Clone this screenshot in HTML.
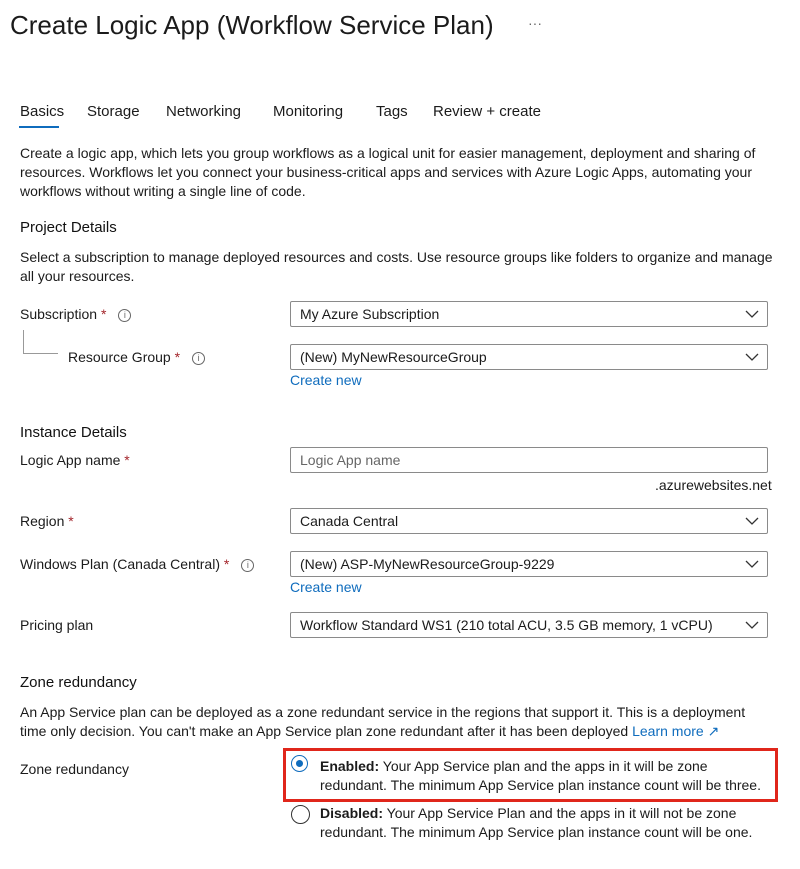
<!DOCTYPE html>
<html><head><meta charset="utf-8"><style>
body{margin:0;width:800px;height:869px;background:#fff;font-family:"Liberation Sans",sans-serif;color:#1b1b1b;position:relative;overflow:hidden}
.a{position:absolute;white-space:nowrap;font-size:14px;line-height:19px}
.t{font-size:26px;line-height:32px}
.h{font-size:15px;font-weight:normal;color:#111}
.req{color:#a4262c}
.i{display:inline-block;width:11px;height:11px;border:1px solid #666;border-radius:50%;font-size:9px;line-height:11px;text-align:center;color:#666;vertical-align:1px;margin-left:12px}
.sel{position:absolute;left:290px;width:476px;height:24px;border:1px solid #8a8a8a;border-radius:2px;font-size:14px;line-height:24px;box-sizing:content-box}
.sel span{margin-left:9px}
.sel svg{position:absolute;right:8px;top:8px}
.lk{color:#0f6cbd}
</style></head><body>
<div class="a t" style="left:10px;top:9px">Create Logic App (Workflow Service Plan)</div>
<div class="a" style="left:528px;top:14px;color:#666">···</div>
<div class="a" style="left:20px;top:102px;font-size:15px">Basics</div>
<div style="position:absolute;left:19px;top:126px;width:40px;height:2px;background:#0f6cbd"></div>
<div class="a" style="left:87px;top:102px;font-size:15px">Storage</div>
<div class="a" style="left:166px;top:102px;font-size:15px">Networking</div>
<div class="a" style="left:273px;top:102px;font-size:15px">Monitoring</div>
<div class="a" style="left:376px;top:102px;font-size:15px">Tags</div>
<div class="a" style="left:433px;top:102px;font-size:15px">Review + create</div>
<div class="a" style="left:20px;top:144px;white-space:normal;width:760px">Create a logic app, which lets you group workflows as a logical unit for easier management, deployment and sharing of resources. Workflows let you connect your business-critical apps and services with Azure Logic Apps, automating your workflows without writing a single line of code.</div>
<div class="a h" style="left:20px;top:218px">Project Details</div>
<div class="a" style="left:20px;top:248px;white-space:normal;width:760px">Select a subscription to manage deployed resources and costs. Use resource groups like folders to organize and manage all your resources.</div>
<div class="a" style="left:20px;top:305px">Subscription <span class="req">*</span><span class="i">i</span></div>
<div style="position:absolute;left:23px;top:330px;width:34px;height:23px;border-left:1px solid #999;border-bottom:1px solid #999"></div>
<div class="a" style="left:68px;top:348px">Resource Group <span class="req">*</span><span class="i">i</span></div>
<div class="sel" style="top:301px"><span>My Azure Subscription</span><svg width="14" height="8"><path d="M1 1l6 6 6-6" fill="none" stroke="#333" stroke-width="1.3"/></svg></div>
<div class="sel" style="top:344px"><span>(New) MyNewResourceGroup</span><svg width="14" height="8"><path d="M1 1l6 6 6-6" fill="none" stroke="#333" stroke-width="1.3"/></svg></div>
<div class="a lk" style="left:290px;top:371px">Create new</div>
<div class="a h" style="left:20px;top:423px">Instance Details</div>
<div class="a" style="left:20px;top:451px">Logic App name <span class="req">*</span></div>
<div class="sel" style="top:447px"><span style="color:#666">Logic App name</span></div>
<div class="a" style="left:655px;top:476px">.azurewebsites.net</div>
<div class="a" style="left:20px;top:512px">Region <span class="req">*</span></div>
<div class="sel" style="top:508px"><span>Canada Central</span><svg width="14" height="8"><path d="M1 1l6 6 6-6" fill="none" stroke="#333" stroke-width="1.3"/></svg></div>
<div class="a" style="left:20px;top:555px">Windows Plan (Canada Central) <span class="req">*</span><span class="i">i</span></div>
<div class="sel" style="top:551px"><span>(New) ASP-MyNewResourceGroup-9229</span><svg width="14" height="8"><path d="M1 1l6 6 6-6" fill="none" stroke="#333" stroke-width="1.3"/></svg></div>
<div class="a lk" style="left:290px;top:578px">Create new</div>
<div class="a" style="left:20px;top:616px">Pricing plan</div>
<div class="sel" style="top:612px"><span>Workflow Standard WS1 (210 total ACU, 3.5 GB memory, 1 vCPU)</span><svg width="14" height="8"><path d="M1 1l6 6 6-6" fill="none" stroke="#333" stroke-width="1.3"/></svg></div>
<div class="a h" style="left:20px;top:673px">Zone redundancy</div>
<div class="a" style="left:20px;top:703px;white-space:normal;width:748px">An App Service plan can be deployed as a zone redundant service in the regions that support it. This is a deployment time only decision. You can't make an App Service plan zone redundant after it has been deployed <span class="lk">Learn more ↗</span></div>
<div class="a" style="left:20px;top:760px">Zone redundancy</div>
<div style="position:absolute;left:283px;top:748px;width:489px;height:48px;border:3px solid #e0261b"></div>
<div style="position:absolute;left:291px;top:755px;width:17px;height:17px;border:1px solid #0f6cbd;border-radius:50%;box-sizing:border-box"></div>
<div style="position:absolute;left:296px;top:760px;width:7px;height:7px;background:#0f6cbd;border-radius:50%"></div>
<div class="a" style="left:320px;top:757px">
<b>Enabled:</b> Your App Service plan and the apps in it will be zone<br>redundant. The minimum App Service plan instance count will be three.</div>
<div style="position:absolute;left:291px;top:805px;width:19px;height:19px;border:1px solid #333;border-radius:50%;box-sizing:border-box"></div>
<div class="a" style="left:320px;top:804px">
<b>Disabled:</b> Your App Service Plan and the apps in it will not be zone<br>redundant. The minimum App Service plan instance count will be one.</div>
</body></html>
